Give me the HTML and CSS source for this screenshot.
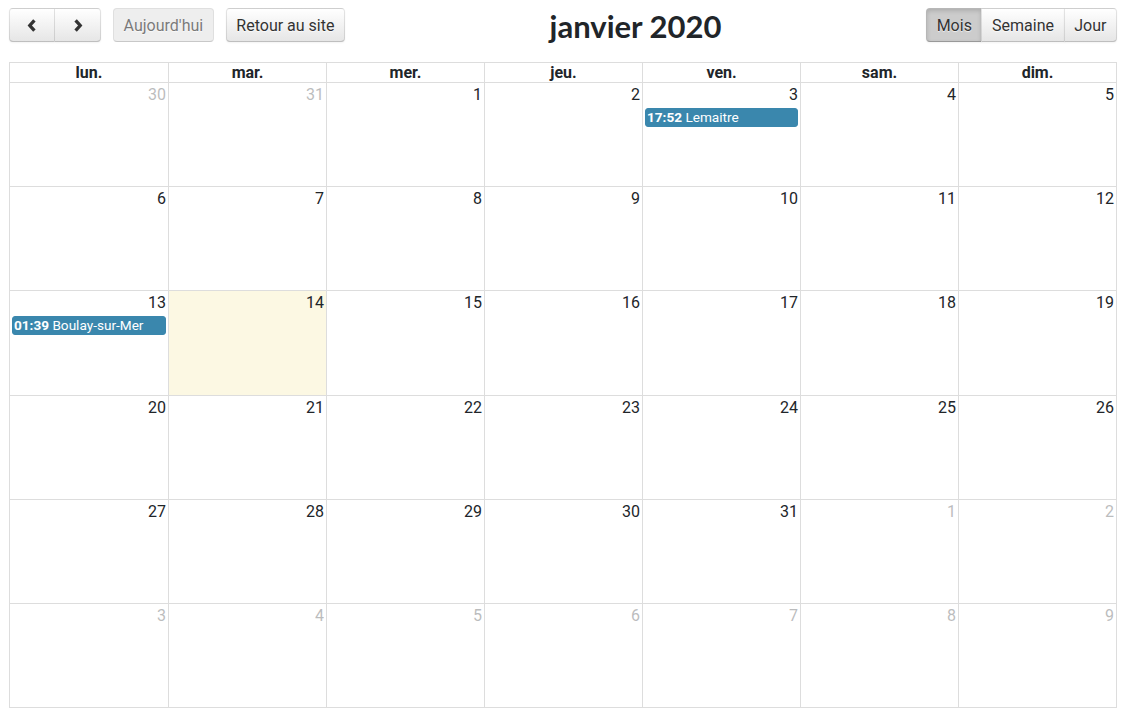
FILE: index.html
```html
<!DOCTYPE html>
<html lang="fr">
<head>
<meta charset="utf-8">
<title>Calendrier</title>
<link rel="stylesheet" href="styles.css">
</head>
<body>
<div class="calendar">
  <div class="toolbar">
    <div class="tb-left">
      <div class="btn-group">
        <button class="btn btn-first btn-icon" aria-label="précédent">
          <svg width="10" height="13" viewBox="0 0 10 13"><path d="M7.4 1.4 L2.8 6.5 L7.4 11.6" fill="none" stroke="#333" stroke-width="3.3" stroke-linejoin="miter"/></svg>
        </button>
        <button class="btn btn-last btn-icon btn-nooverlap" aria-label="suivant">
          <svg width="10" height="13" viewBox="0 0 10 13"><path d="M2.6 1.4 L7.2 6.5 L2.6 11.6" fill="none" stroke="#333" stroke-width="3.3" stroke-linejoin="miter"/></svg>
        </button>
      </div>
      <button class="btn btn-single btn-disabled">Aujourd'hui</button>
      <button class="btn btn-single">Retour au site</button>
    </div>
    <div class="tb-center"><h2 class="title">janvier 2020</h2></div>
    <div class="tb-right">
      <div class="btn-group">
        <button class="btn btn-first btn-active">Mois</button>
        <button class="btn btn-mid">Semaine</button>
        <button class="btn btn-last">Jour</button>
      </div>
    </div>
  </div>

  <div class="grid">
    <div class="head">
      <div class="hcell">lun.</div><div class="hcell">mar.</div><div class="hcell">mer.</div><div class="hcell">jeu.</div><div class="hcell">ven.</div><div class="hcell">sam.</div><div class="hcell">dim.</div>
    </div>
    <div class="weeks">
      <div class="week">
        <div class="day other"><div class="num">30</div></div>
        <div class="day other"><div class="num">31</div></div>
        <div class="day"><div class="num">1</div></div>
        <div class="day"><div class="num">2</div></div>
        <div class="day"><div class="num">3</div><div class="event"><span class="ev-time">17:52</span> Lemaitre</div></div>
        <div class="day"><div class="num">4</div></div>
        <div class="day"><div class="num">5</div></div>
      </div>
      <div class="week">
        <div class="day"><div class="num">6</div></div>
        <div class="day"><div class="num">7</div></div>
        <div class="day"><div class="num">8</div></div>
        <div class="day"><div class="num">9</div></div>
        <div class="day"><div class="num">10</div></div>
        <div class="day"><div class="num">11</div></div>
        <div class="day"><div class="num">12</div></div>
      </div>
      <div class="week">
        <div class="day"><div class="num">13</div><div class="event"><span class="ev-time">01:39</span> Boulay-sur-Mer</div></div>
        <div class="day today"><div class="num">14</div></div>
        <div class="day"><div class="num">15</div></div>
        <div class="day"><div class="num">16</div></div>
        <div class="day"><div class="num">17</div></div>
        <div class="day"><div class="num">18</div></div>
        <div class="day"><div class="num">19</div></div>
      </div>
      <div class="week">
        <div class="day"><div class="num">20</div></div>
        <div class="day"><div class="num">21</div></div>
        <div class="day"><div class="num">22</div></div>
        <div class="day"><div class="num">23</div></div>
        <div class="day"><div class="num">24</div></div>
        <div class="day"><div class="num">25</div></div>
        <div class="day"><div class="num">26</div></div>
      </div>
      <div class="week">
        <div class="day"><div class="num">27</div></div>
        <div class="day"><div class="num">28</div></div>
        <div class="day"><div class="num">29</div></div>
        <div class="day"><div class="num">30</div></div>
        <div class="day"><div class="num">31</div></div>
        <div class="day other"><div class="num">1</div></div>
        <div class="day other"><div class="num">2</div></div>
      </div>
      <div class="week">
        <div class="day other"><div class="num">3</div></div>
        <div class="day other"><div class="num">4</div></div>
        <div class="day other"><div class="num">5</div></div>
        <div class="day other"><div class="num">6</div></div>
        <div class="day other"><div class="num">7</div></div>
        <div class="day other"><div class="num">8</div></div>
        <div class="day other"><div class="num">9</div></div>
      </div>
    </div>
  </div>
</div>
</body>
</html>
```
FILE: styles.css
```css
* { box-sizing: border-box; }

html, body {
  margin: 0;
  padding: 0;
  background: #fff;
}

body {
  font-family: Roboto, "Liberation Sans", sans-serif;
  font-size: 16px;
  color: #212529;
}

.calendar {
  width: 1108px;
  margin: 8px 0 0 9px;
}

/* toolbar */
.toolbar {
  display: flex;
  align-items: flex-start;
  height: 54px;
}

.tb-left {
  display: flex;
  gap: 12px;
}

.tb-center {
  flex: 1;
  text-align: center;
}

.tb-right {
  display: flex;
}

.title {
  margin: 1px 0 0 0;
  font-family: Lato, "Open Sans", sans-serif;
  font-weight: 700;
  font-size: 31px;
  line-height: 34px;
  color: #212529;
}

.btn-group {
  display: flex;
}

.btn {
  height: 34px;
  margin: 0;
  padding: 0 9.6px;
  font-family: Roboto, "Liberation Sans", sans-serif;
  font-size: 16px;
  color: #333;
  background-color: #f5f5f5;
  background-image: linear-gradient(to bottom, #ffffff, #e6e6e6);
  border: 1px solid;
  border-color: rgba(0,0,0,.1) rgba(0,0,0,.1) rgba(0,0,0,.25);
  text-shadow: 0 1px 1px rgba(255,255,255,.75);
  box-shadow: inset 0 1px 0 rgba(255,255,255,.2), 0 1px 2px rgba(0,0,0,.05);
  display: flex;
  align-items: center;
  justify-content: center;
  white-space: nowrap;
}

.btn-single { border-radius: 4px; }
.btn-first { border-radius: 4px 0 0 4px; }
.btn-last { border-radius: 0 4px 4px 0; margin-left: -1px; }
.btn-mid { border-radius: 0; margin-left: -1px; }
.btn-last.btn-nooverlap { margin-left: 0; border-left: 0; }

.btn-icon {
  width: 46px;
  padding: 0;
}

.btn-disabled {
  opacity: .65;
  background-color: #e6e6e6;
  background-image: none;
  box-shadow: none;
}

.btn-active {
  background-color: #cccccc;
  background-image: none;
  box-shadow: inset 0 2px 4px rgba(0,0,0,.15), 0 1px 2px rgba(0,0,0,.05);
}

/* grid */
.grid {
  border: 1px solid #ddd;
}

.head {
  display: grid;
  grid-template-columns: repeat(7, 1fr);
  border-bottom: 1px solid #ddd;
}

.hcell {
  height: 19px;
  line-height: 19px;
  text-align: center;
  font-weight: 700;
  font-size: 16px;
}

.hcell + .hcell { border-left: 1px solid #ddd; }

.weeks {
  height: 624px;
  display: flex;
  flex-direction: column;
}

.week {
  flex: 1;
  display: grid;
  grid-template-columns: repeat(7, 1fr);
}

.week + .week { border-top: 1px solid #ddd; }

.day {
  min-width: 0;
}

.day + .day { border-left: 1px solid #ddd; }

.today { background: #fcf8e3; }

.num {
  text-align: right;
  padding: 2px;
  line-height: 19px;
  font-size: 16px;
}

.other .num { opacity: .3; }

.event {
  margin: 2px 2px 0 2px;
  padding: 0 1px;
  background: #3a87ad;
  border: 1px solid #3a87ad;
  border-radius: 3px;
  color: #fff;
  font-size: 13.6px;
  line-height: 17px;
  white-space: nowrap;
  overflow: hidden;
}

.ev-time { font-weight: 700; }
```
